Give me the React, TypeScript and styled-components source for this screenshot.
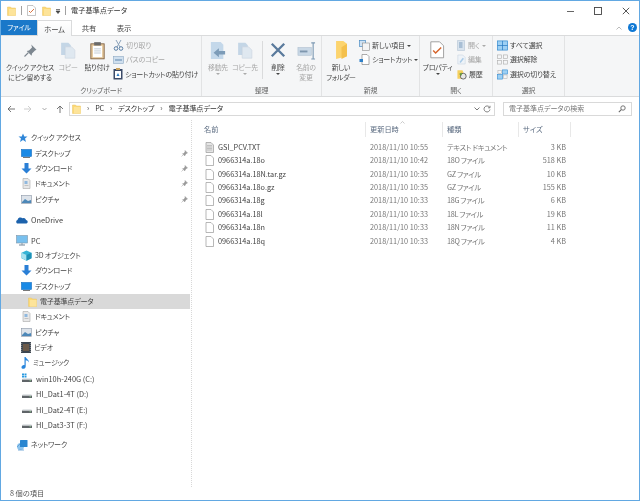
import React from "react";
import styled, { createGlobalStyle } from "styled-components";

const Global = createGlobalStyle`
  html, body { margin: 0; padding: 0; background: #fff; overflow: hidden; }
  #root { width: 640px; height: 501px; }
  * { box-sizing: border-box; }
`;
const Win = styled.div`
  width: 640px; height: 501px; background: #fff; display: flex; flex-direction: column;
  border: 1px solid #62a8e2; overflow: hidden;
  font-family: "Noto Sans CJK JP", "Noto Sans", sans-serif; font-size: 8px; color: #3c3c3c;
  font-feature-settings: "palt"; filter: blur(0.3px);
  line-height: 11px; white-space: nowrap;
`;
const TitleBar = styled.div`height: 19px; display: flex; align-items: center; padding-left: 6px; flex: none;`;
const Sep = styled.span`width: 1px; height: 9px; background: ${p => (p.$clear ? "transparent" : "#a0a0a0")}; margin: 0 ${p => p.$m}px;`;
const TitleText = styled.span`font-size: 7.2px; color: #333; margin-left: 1px;`;
const WinButtons = styled.div`margin-left: auto; display: flex; align-items: center; padding-right: 9px; gap: 20px;`;
const Tabs = styled.div`height: 15px; display: flex; align-items: stretch; flex: none; position: relative; z-index: 1;`;
const FileTab = styled.div`width: 36px; background: #1a78c9; color: #fff; display: flex; align-items: center; justify-content: center; font-size: 7px; letter-spacing: -0.2px;`;
const Tab = styled.div`
  width: ${p => p.$w}px; display: flex; align-items: center; justify-content: center; font-size: 7.4px; letter-spacing: -0.2px; color: #444;
  ${p => p.$on && "border:1px solid #dadbdc;border-bottom:none;background:linear-gradient(#fff,#f5f6f7);margin-bottom:-1px;"}
`;
const TabRight = styled.div`margin-left: auto; display: flex; align-items: center; gap: 6px; padding-right: 2px;`;
const Help = styled.span`
  width: 9px; height: 9px; border-radius: 50%; background: #0f78d4; color: #fff; font: bold 7px/9px "Liberation Sans", sans-serif; text-align: center;
`;
const Ribbon = styled.div`
  height: 62px; flex: none; display: flex; background: #f5f6f7; border-top: 1px solid #dadbdc; border-bottom: 1px solid #dadbdc;
`;
const Group = styled.div`
  width: ${p => p.$w}px; flex: none; display: flex; flex-direction: column; border-right: 1px solid #e2e3e4;
`;
const GroupBody = styled.div`flex: 1; display: flex; min-height: 0; padding-left: ${p => p.$pl || 0}px; padding-top: 2px;`;
const GroupLabel = styled.div`height: 13px; flex: none; padding-top: 2px; text-align: center; color: #666; font-size: 7px; letter-spacing: -0.2px; line-height: 10px;`;
const Large = styled.div`
  width: ${p => p.$w}px; flex: none; display: flex; flex-direction: column; align-items: center; text-align: center;
  color: ${p => (p.$off ? "#a6a6a6" : "#444")}; font-size: 6.9px; letter-spacing: -0.25px; line-height: 10px; white-space: pre;
`;
const IconBox = styled.div`height: 24px; flex: none; display: flex; align-items: center; justify-content: center;`;
const Caret = styled.span`width: 0; height: 0; border: 2px solid transparent; border-top: 2.5px solid ${p => p.$c || "#444"}; border-bottom: none; margin-top: 1px; display: inline-block; flex: none;`;
const VDiv = styled.span`width: 1px; height: 38px; background: #dadbdc; margin: 3px 0 0 3px; flex: none;`;
const SmallList = styled.div`display: flex; flex-direction: column; gap: 2.5px; padding-top: 1px; margin-left: ${p => p.$ml || 0}px;`;
const Small = styled.div`
  height: 12px; display: flex; align-items: center; gap: 2px; font-size: 7px; letter-spacing: -0.15px; color: ${p => (p.$off ? "#a6a6a6" : "#444")};
  svg { flex: none; }
`;
const AddrRow = styled.div`height: 23px; flex: none; display: flex; align-items: center; padding: 0 7px 0 6px;`;
const Nav = styled.div`display: flex; align-items: center; width: 62px; flex: none; justify-content: space-between; padding-right: 5px;`;
const Addr = styled.div`
  width: 426px; height: 14px; border: 1px solid #d9d9d9; display: flex; align-items: center; padding-left: 2px; gap: 6px; font-size: 7.2px; letter-spacing: -0.2px; color: #333;
`;
const Crumb = styled.span`color: #666; font-size: 7px; font-family: "Liberation Sans", sans-serif;`;
const AddrEnd = styled.div`margin-left: auto; display: flex; align-items: center; gap: 3px; padding-right: 3px;`;
const Search = styled.div`
  margin-left: 8px; width: 129px; height: 14px; border: 1px solid #d9d9d9; display: flex; align-items: center; justify-content: space-between; padding: 0 5px; color: #777; font-size: 7px;
`;
const Main = styled.div`flex: 1; display: flex; min-height: 0;`;
const Side = styled.div`
  width: 191px; flex: none; border-right: 1px dotted #d8d8d8; padding-top: 10px; display: flex; flex-direction: column;
`;
const NavRow = styled.div`
  height: 15.35px; flex: none; display: flex; align-items: center; width: 189px; padding-left: ${p => p.$in}px; gap: 3px; color: #444;
  font-size: ${p => (p.$latin ? 7.4 : 7.1)}px; letter-spacing: ${p => (p.$latin ? 0 : -0.25)}px;
  margin-top: ${p => p.$gap || 0}px; background: ${p => (p.$sel ? "#d9d9d9" : "transparent")};
  svg { flex: none; }
`;
const Pin = styled.span`margin-left: auto; margin-right: 2px; display: flex;`;
const Content = styled.div`flex: 1; min-width: 0; display: flex; flex-direction: column; padding-left: 8px;`;
const Grid = "grid-template-columns: 166px 77px 76px 52px;";
const Head = styled.div`display: grid; ${Grid} height: 19px; color: #5b6b80; font-size: 7.2px; align-items: center; position: relative; flex: none; margin-bottom: 1.5px;`;
const HeadCell = styled.div`padding-left: 4px; border-right: 1px solid #e8e8e8; height: 15px; display: flex; align-items: center; position: relative;`;
const Sort = styled.span`position: absolute; left: 34px; top: -1px; width: 5px; height: 3px; display: flex;`;
const FileRow = styled.div`display: grid; ${Grid} height: 13.43px; align-items: center; color: #777; font-size: 7.3px; flex: none;`;
const NameCell = styled.div`display: flex; align-items: center; gap: 4px; padding-left: 5px; color: #444; svg { flex: none; }`;
const Cell = styled.div`padding-left: 4px;`;
const TypeCell = styled.div`padding-left: 4px; letter-spacing: -0.35px;`;
const SizeCell = styled.div`text-align: right; padding-right: 5px;`;
const Status = styled.div`height: 13px; flex: none; padding-left: 9px; color: #555; font-size: 7.2px; line-height: 12px;`;

const FolderIco = ({ s = 10 }: { s?: number }) => (
  <svg width={s * 0.9} height={s} viewBox="0 0 9 10"><path d="M0.5 1h3l1 1h4v7.5h-8z" fill="#fcd976" stroke="#e8c468" strokeWidth=".5" /><path d="M2 3h6.5v6.5H2z" fill="#fde49a" /></svg>
);
const Doc = ({ gray }: { gray?: boolean }) => (
  <svg width="9" height="11" viewBox="0 0 9 11"><path d="M1 .5h5L8.500 3v7.500H1z" fill={gray ? "#e4e4e4" : "#fff"} stroke="#9a9a9a" strokeWidth=".7" />{gray && <path d="M2 3.500h5M2 5h5M2 6.500h5M2 8h5" stroke="#a8a8a8" strokeWidth=".6" />}</svg>
);
const CheckDoc = ({ s = 1 }: { s?: number }) => (
  <svg width={9 * s} height={11 * s} viewBox="0 0 9 11"><path d="M.5.500h5.500L8.500 3v7.500H.5z" fill="#fff" stroke="#8d8d8d" strokeWidth=".5" /><path d="M2 6l1.500 1.500L7 4" fill="none" stroke="#d6632a" strokeWidth=".9" /></svg>
);
const PinSm = () => (
  <svg width="7" height="7" viewBox="0 0 7 7"><path d="M4 .5l2.500 2.500-1 .5-1.500 1.500-.2 1-2.300-2.300 1-.2L4 2z M2 5L.5 6.500" fill="#9a9a9a" stroke="#9a9a9a" strokeWidth=".5" /></svg>
);
const Screen = () => <svg width="11" height="9" viewBox="0 0 11 9"><rect x=".5" y=".5" width="10" height="7" fill="#1a8ae6" stroke="#0f6cc0" strokeWidth=".6" /><path d="M2 8.500h7" stroke="#555" strokeWidth=".8" /></svg>;
const Down = () => <svg width="11" height="11" viewBox="0 0 11 11"><path d="M3.500 0h4v5.500H10.500L5.500 10.500.5 5.500h3z" fill="#2a7fd6" /></svg>;
const Docs = () => <svg width="11" height="11" viewBox="0 0 11 11"><path d="M2 .5h5l2 2v8H2z" fill="#e8e8e8" stroke="#a8a8a8" strokeWidth=".6" /><path d="M3.500 3h3v3h-3z" fill="#8fb8de" /><path d="M3.500 7.500h4" stroke="#a8a8a8" strokeWidth=".6" /></svg>;
const Pic = () => <svg width="11" height="9" viewBox="0 0 11 9"><rect x=".5" y=".5" width="10" height="8" fill="#dde3ea" stroke="#8a96a5" strokeWidth=".6" /><path d="M1 7l3-3 3 2 3-1v3H1z" fill="#4d88b8" /></svg>;
const Star = () => <svg width="10" height="10" viewBox="0 0 10 10"><path d="M5 .5l1.300 3H9.500L7 5.600l1 3.400-3-2-3 2 1-3.400L.5 3.500h3.200z" fill="#2f86d8" /></svg>;
const Cloud = () => <svg width="12" height="8" viewBox="0 0 12 8"><path d="M1 7.500a2 2 0 0 1 .5-3.500 3 3 0 0 1 5-1.800 2.500 2.500 0 0 1 3.500 1.800A1.800 1.800 0 0 1 10.500 7.500z" fill="#1c62ac" /></svg>;
const Pc = () => <svg width="12" height="11" viewBox="0 0 12 11"><rect x=".5" y=".5" width="11" height="7.500" fill="#79c0ee" stroke="#7d96aa" strokeWidth=".6" /><path d="M3 10h6" stroke="#8a9aa8" strokeWidth="1.200" /><path d="M5.500 8h1v2h-1z" fill="#8a9aa8" /></svg>;
const Cube = () => <svg width="11" height="11" viewBox="0 0 11 11"><path d="M5.500.5l5 2.300v5.500l-5 2.500-5-2.500V2.800z" fill="#35b4d6" /><path d="M.5 2.800l5 2.300v5.400l-5-2.500z" fill="#a8e2f0" /><path d="M5.500 5.100l5-2.300v5.500l-5 2.500z" fill="#1e8fb5" /></svg>;
const Video = () => <svg width="10" height="11" viewBox="0 0 10 11"><rect width="10" height="11" fill="#3d4650" /><rect x="2" y="2" width="6" height="7" fill="#6b5a4a" /><path d="M.7 1v9M9.300 1v9" stroke="#aaa" strokeWidth=".8" strokeDasharray="1 1" /></svg>;
const Music = () => <svg width="9" height="12" viewBox="0 0 9 12"><path d="M3.500 0h1.200c.3 2 3.800 2.500 3 5.500-.5-1.500-1.500-2-3-2.200V9.500c0 1.500-1.500 2.500-3 2.300C.5 11.500 0 10 1 9s1.800-1 2.500-.8z" fill="#2a86dc" /></svg>;
const Drive = ({ win }: { win?: boolean }) => <svg width="12" height="10" viewBox="0 0 12 10"><rect x="1" y="6.500" width="10" height="2.500" fill="#5f6468" /><rect x="1.500" y="5.500" width="9" height="1" fill="#c8cdd2" /><path d="M8.500 7.700h1.500" stroke="#8fe08f" strokeWidth=".7" />{win && <path d="M1 .5h2v1.700H1zM3.500.5h2v1.700h-2zM1 2.700h2v1.700H1zM3.500 2.700h2v1.700h-2z" fill="#2a9ae0" />}</svg>;
const Network = () => <svg width="12" height="12" viewBox="0 0 12 12"><circle cx="4.500" cy="7.500" r="3.500" fill="#8cc4ee" /><rect x="4" y="1" width="7.500" height="7" rx=".5" fill="#2a86d0" /><path d="M1 8l3-3M2 11h6" stroke="#5a9bd0" strokeWidth=".8" /></svg>;

const I = {
  Pin: () => <svg width="15" height="15" viewBox="0 0 20 20"><path d="M11 2l7 7-2 1-4 4-.5 3L5 10.500l3-.5 4-4z" fill="#7d8790" /><path d="M7 13l-5 5" stroke="#7d8790" strokeWidth="1.500" /></svg>,
  Copy: () => <svg width="16" height="17" viewBox="0 0 19 21"><path d="M1 1h9l3 3v12H1z" fill="#c4d6e6" /><path d="M6 6h8l4 4v10H6z" fill="#dfe8f0" stroke="#c4d0dc" strokeWidth=".6" /></svg>,
  Paste: () => <svg width="15" height="19" viewBox="0 0 18 22"><rect x="1" y="3" width="16" height="18" fill="#e3c79c" stroke="#7a5a3a" strokeWidth="1" /><rect x="3.500" y="5.500" width="11" height="13.500" fill="#fff" /><rect x="5" y="1" width="8" height="4" fill="#6a6a6a" /><path d="M5 9h8M5 11.500h8M5 14h8" stroke="#9ab" strokeWidth=".7" /></svg>,
  Move: () => <svg width="16" height="19" viewBox="0 0 18 21"><path d="M1 1h11l3 3v16H1z" fill="#c4d8ea" /><path d="M17 11H10V8l-6 5 6 5v-3h7z" fill="#7d9cb8" /></svg>,
  Del: () => <svg width="16" height="16" viewBox="0 0 18 18"><path d="M2 2l14 14M16 2L2 16" stroke="#5a7a9c" strokeWidth="2.600" /></svg>,
  Ren: () => <svg width="19" height="19" viewBox="0 0 20 20"><rect x="1" y="7" width="14" height="8" fill="#c9d8e6" stroke="#a9bccd" strokeWidth=".6" /><path d="M3 11h8" stroke="#7e97ae" strokeWidth="2" /><path d="M17 2v17M15 2h4M15 19h4" stroke="#7e9ab4" strokeWidth="1.200" /></svg>,
  Folder: () => <svg width="13" height="20" viewBox="0 0 14 22"><path d="M1 1h8l4 3v14l-12 3z" fill="#fcd46e" /><path d="M7 8l6-4v14l-6 3z" fill="#f4c04c" /></svg>,
  NewItem: () => <svg width="11" height="11" viewBox="0 0 11 11"><rect x=".5" y=".5" width="6" height="6" fill="#cfe2f3" stroke="#4a8cc4" strokeWidth=".7" /><rect x="3.500" y="3" width="7" height="7.500" fill="#f4f4f4" stroke="#8a8a8a" strokeWidth=".6" /></svg>,
  Shortcut: () => <svg width="11" height="11" viewBox="0 0 11 11"><path d="M3 .5h5l2 2v8H3z" fill="#fff" stroke="#777" strokeWidth=".6" /><path d="M.5 5h3.500v3H.5z" fill="#2f80c8" /></svg>,
  Cut: () => <svg width="11" height="12" viewBox="0 0 11 12"><path d="M3 1l4 7M8 1L4 8" stroke="#8ba3bb" strokeWidth="1" /><circle cx="3" cy="9.500" r="1.800" fill="none" stroke="#5a7fa6" strokeWidth="1" /><circle cx="8" cy="9.500" r="1.800" fill="none" stroke="#5a7fa6" strokeWidth="1" /></svg>,
  PathCopy: () => <svg width="11" height="8" viewBox="0 0 11 8"><rect x=".5" y=".5" width="10" height="7" fill="#cfdfee" stroke="#8ea9c4" strokeWidth=".6" /><path d="M2 4h7" stroke="#5f86ad" strokeWidth="1" /></svg>,
  ShortPaste: () => <svg width="10" height="12" viewBox="0 0 10 12"><rect x=".5" y="1" width="9" height="10.500" fill="#3b4a68" /><rect x="2" y="3" width="6" height="7" fill="#fff" /><path d="M3.500 8l1.500-3 1.500 3z" fill="#2a7ac4" /><rect x="3" y="0" width="4" height="2" fill="#c8a25e" /></svg>,
  OpenS: () => <svg width="9" height="11" viewBox="0 0 9 11"><path d="M.5.500h7v10h-7z" fill="#d8e3ee" stroke="#b4c4d4" strokeWidth=".6" /><path d="M2 3h3.500M2 5h3.500M2 7h3.500" stroke="#6f93b6" strokeWidth=".9" /></svg>,
  Edit: () => <svg width="9" height="11" viewBox="0 0 11 12"><path d="M1 .5h6l3 3v8H1z" fill="#eef3f8" stroke="#c2d0de" strokeWidth=".6" /><path d="M3 9l4-5 1.500 1.200-4 5z" fill="#a9cbe8" /></svg>,
  Hist: () => <svg width="10" height="11" viewBox="0 0 12 12"><path d="M.5 1h6l1 2v8h-7z" fill="#f5cf5e" /><circle cx="7.500" cy="8" r="3.500" fill="#e8e8e8" stroke="#444" strokeWidth=".9" /><path d="M2.500 5.500l3-2v4z" fill="#5da02e" /></svg>,
  All: () => <svg width="11" height="11" viewBox="0 0 12 11"><rect x=".5" y=".5" width="11" height="10" fill="#9dd0f4" stroke="#3a8fd2" strokeWidth=".8" /><path d="M6 .5v10M.5 5.500h11" stroke="#2a7cc2" strokeWidth=".8" /></svg>,
  None: () => <svg width="11" height="11" viewBox="0 0 12 11"><g fill="none" stroke="#b0b0b0" strokeWidth=".7"><rect x=".5" y=".5" width="4.500" height="4" /><rect x="7" y=".5" width="4.500" height="4" /><rect x=".5" y="6.500" width="4.500" height="4" /><rect x="7" y="6.500" width="4.500" height="4" /></g></svg>,
  Invert: () => <svg width="11" height="11" viewBox="0 0 12 11"><rect x="6" y=".5" width="5.500" height="4.500" fill="#9dd0f4" stroke="#3a8fd2" strokeWidth=".7" /><rect x=".5" y="5.500" width="5.500" height="5" fill="#9dd0f4" stroke="#3a8fd2" strokeWidth=".7" /><rect x="1" y="1" width="4" height="3.500" fill="none" stroke="#b0b0b0" strokeWidth=".6" /><rect x="7" y="6" width="4" height="4" fill="none" stroke="#b0b0b0" strokeWidth=".6" /></svg>,
};

const files = [
  ["GSI_PCV.TXT", "2018/11/10 10:55", "テキスト ドキュメント", "3 KB", true],
  ["0966314a.18o", "2018/11/10 10:42", "18O ファイル", "518 KB"],
  ["0966314a.18N.tar.gz", "2018/11/10 10:35", "GZ ファイル", "10 KB"],
  ["0966314a.18o.gz", "2018/11/10 10:35", "GZ ファイル", "155 KB"],
  ["0966314a.18g", "2018/11/10 10:33", "18G ファイル", "6 KB"],
  ["0966314a.18l", "2018/11/10 10:33", "18L ファイル", "19 KB"],
  ["0966314a.18n", "2018/11/10 10:33", "18N ファイル", "11 KB"],
  ["0966314a.18q", "2018/11/10 10:33", "18Q ファイル", "4 KB"],
] as const;

const navRows: [React.ReactNode, string, number, number?, boolean?, boolean?][] = [
  [<Star />, "クイック アクセス", 17, 0],
  [<Screen />, "デスクトップ", 20, 0, true],
  [<Down />, "ダウンロード", 20, 0, true],
  [<Docs />, "ドキュメント", 20, 0, true],
  [<Pic />, "ピクチャ", 20, 0, true],
  [<Cloud />, "OneDrive", 15, 5.5],
  [<Pc />, "PC", 15, 5],
  [<Cube />, "3D オブジェクト", 20],
  [<Down />, "ダウンロード", 20],
  [<Screen />, "デスクトップ", 20],
  [<FolderIco />, "電子基準点データ", 27, 0, false, true],
  [<Docs />, "ドキュメント", 20],
  [<Pic />, "ピクチャ", 20],
  [<Video />, "ビデオ", 20],
  [<Music />, "ミュージック", 20],
  [<Drive win />, "win10h-240G (C:)", 20],
  [<Drive />, "HI_Dat1-4T (D:)", 20],
  [<Drive />, "HI_Dat2-4T (E:)", 20],
  [<Drive />, "HI_Dat3-3T (F:)", 20],
  [<Network />, "ネットワーク", 15, 5],
];

export default function App() {
  return (
    <Win>
      <Global />
      <TitleBar>
        <FolderIco s={10} />
        <Sep $m={5} />
        <CheckDoc />
        <Sep $m={2.5} $clear />
        <FolderIco s={10} />
        <Sep $m={1.5} $clear />
        <svg width="6" height="6" viewBox="0 0 6 6"><path d="M1 1.500h4M1 3l2 2.500L5 3z" stroke="#444" strokeWidth=".7" fill="#444" /></svg>
        <Sep $m={4} />
        <TitleText>電子基準点データ</TitleText>
        <WinButtons>
          <svg width="8" height="8" viewBox="0 0 8 8"><path d="M1 4.500h7" stroke="#666" strokeWidth="1" /></svg>
          <svg width="8" height="8" viewBox="0 0 8 8"><rect x=".5" y=".5" width="7" height="7" fill="none" stroke="#444" strokeWidth=".9" /></svg>
          <svg width="8" height="8" viewBox="0 0 8 8"><path d="M.8.800l6.400 6.400M7.200.800L.8 7.200" stroke="#444" strokeWidth=".9" /></svg>
        </WinButtons>
      </TitleBar>
      <Tabs>
        <FileTab>ファイル</FileTab>
        <Tab $w={35} $on>ホーム</Tab>
        <Tab $w={34}>共有</Tab>
        <Tab $w={36}>表示</Tab>
        <TabRight>
          <svg width="6" height="4" viewBox="0 0 6 4"><path d="M.5 3.500L3 1l2.500 2.500" fill="none" stroke="#aaa" strokeWidth=".8" /></svg>
          <Help>?</Help>
        </TabRight>
      </Tabs>
      <Ribbon>
        <Group $w={201}>
          <GroupBody $pl={4}>
            <Large $w={50}><IconBox><I.Pin /></IconBox>{"クイック アクセス\nにピン留めする"}</Large>
            <Large $w={26} $off><IconBox><I.Copy /></IconBox>コピー</Large>
            <Large $w={32}><IconBox><I.Paste /></IconBox>貼り付け</Large>
            <SmallList>
              <Small $off><I.Cut />切り取り</Small>
              <Small $off><I.PathCopy />パスのコピー</Small>
              <Small><I.ShortPaste />ショートカットの貼り付け</Small>
            </SmallList>
          </GroupBody>
          <GroupLabel>クリップボード</GroupLabel>
        </Group>
        <Group $w={120}>
          <GroupBody $pl={3}>
            <Large $w={26} $off><IconBox><I.Move /></IconBox>移動先<Caret $c="#aaa" /></Large>
            <Large $w={28} $off><IconBox><I.Copy /></IconBox>コピー先<Caret $c="#aaa" /></Large>
            <VDiv />
            <Large $w={30}><IconBox><I.Del /></IconBox>削除<Caret /></Large>
            <Large $w={26} $off><IconBox><I.Ren /></IconBox>{"名前の\n変更"}</Large>
          </GroupBody>
          <GroupLabel>整理</GroupLabel>
        </Group>
        <Group $w={98}>
          <GroupBody $pl={2}>
            <Large $w={34}><IconBox><I.Folder /></IconBox>{"新しい\nフォルダー"}</Large>
            <SmallList $ml={1}>
              <Small><I.NewItem />新しい項目 <Caret /></Small>
              <Small><I.Shortcut />ショートカット <Caret /></Small>
            </SmallList>
          </GroupBody>
          <GroupLabel>新規</GroupLabel>
        </Group>
        <Group $w={73}>
          <GroupBody $pl={1}>
            <Large $w={33}><IconBox><CheckDoc s={1.6} /></IconBox>プロパティ<Caret /></Large>
            <SmallList $ml={3}>
              <Small $off><I.OpenS />開く <Caret $c="#aaa" /></Small>
              <Small $off><I.Edit />編集</Small>
              <Small><I.Hist />履歴</Small>
            </SmallList>
          </GroupBody>
          <GroupLabel>開く</GroupLabel>
        </Group>
        <Group $w={72}>
          <GroupBody $pl={4}>
            <SmallList>
              <Small><I.All />すべて選択</Small>
              <Small><I.None />選択解除</Small>
              <Small><I.Invert />選択の切り替え</Small>
            </SmallList>
          </GroupBody>
          <GroupLabel>選択</GroupLabel>
        </Group>
      </Ribbon>
      <AddrRow>
        <Nav>
          <svg width="8" height="8" viewBox="0 0 8 8"><path d="M8 4H1M4 1L1 4l3 3" fill="none" stroke="#666" strokeWidth=".9" /></svg>
          <svg width="8" height="8" viewBox="0 0 8 8"><path d="M0 4h7M4 1l3 3-3 3" fill="none" stroke="#c8c8c8" strokeWidth=".9" /></svg>
          <svg width="5" height="4" viewBox="0 0 5 4"><path d="M.5 1L2.500 3l2-2" fill="none" stroke="#888" strokeWidth=".7" /></svg>
          <svg width="8" height="8" viewBox="0 0 8 8"><path d="M4 8V1M1 4l3-3 3 3" fill="none" stroke="#666" strokeWidth=".9" /></svg>
        </Nav>
        <Addr>
          <FolderIco s={10} />
          <Crumb>›</Crumb><span>PC</span><Crumb>›</Crumb><span>デスクトップ</span><Crumb>›</Crumb><span>電子基準点データ</span>
          <AddrEnd>
            <svg width="6" height="4" viewBox="0 0 6 4"><path d="M.5.500L3 3l2.500-2.500" fill="none" stroke="#555" strokeWidth=".8" /></svg>
            <svg width="8" height="8" viewBox="0 0 8 8"><path d="M6.500 2.200A3 3 0 1 0 7 4.500M7 .8v2H5" fill="none" stroke="#666" strokeWidth=".8" /></svg>
          </AddrEnd>
        </Addr>
        <Search>
          <span>電子基準点データの検索</span>
          <svg width="8" height="8" viewBox="0 0 8 8"><circle cx="5" cy="3" r="2.200" fill="none" stroke="#666" strokeWidth=".9" /><path d="M3.300 4.700L.8 7.200" stroke="#666" strokeWidth="1.100" /></svg>
        </Search>
      </AddrRow>
      <Main>
        <Side>
          {navRows.map(([ico, label, ind, gap, pin, sel], i) => (
            <NavRow key={i} $in={ind} $gap={gap} $sel={sel} $latin={/^[\x00-\x7f]+$/.test(label)}>
              {ico}{label}
              {pin && <Pin><PinSm /></Pin>}
            </NavRow>
          ))}
        </Side>
        <Content>
          <Head>
            <HeadCell>名前</HeadCell>
            <HeadCell>
              <Sort><svg width="5" height="3" viewBox="0 0 5 3"><path d="M.5 2.500L2.500.5l2 2" fill="none" stroke="#aaa" strokeWidth=".6" /></svg></Sort>
              更新日時
            </HeadCell>
            <HeadCell>種類</HeadCell>
            <HeadCell>サイズ</HeadCell>
          </Head>
          {files.map((f, i) => (
            <FileRow key={i}>
              <NameCell><Doc gray={!!f[4]} />{f[0]}</NameCell>
              <Cell>{f[1]}</Cell>
              <TypeCell>{f[2]}</TypeCell>
              <SizeCell>{f[3]}</SizeCell>
            </FileRow>
          ))}
        </Content>
      </Main>
      <Status>8 個の項目</Status>
    </Win>
  );
}
